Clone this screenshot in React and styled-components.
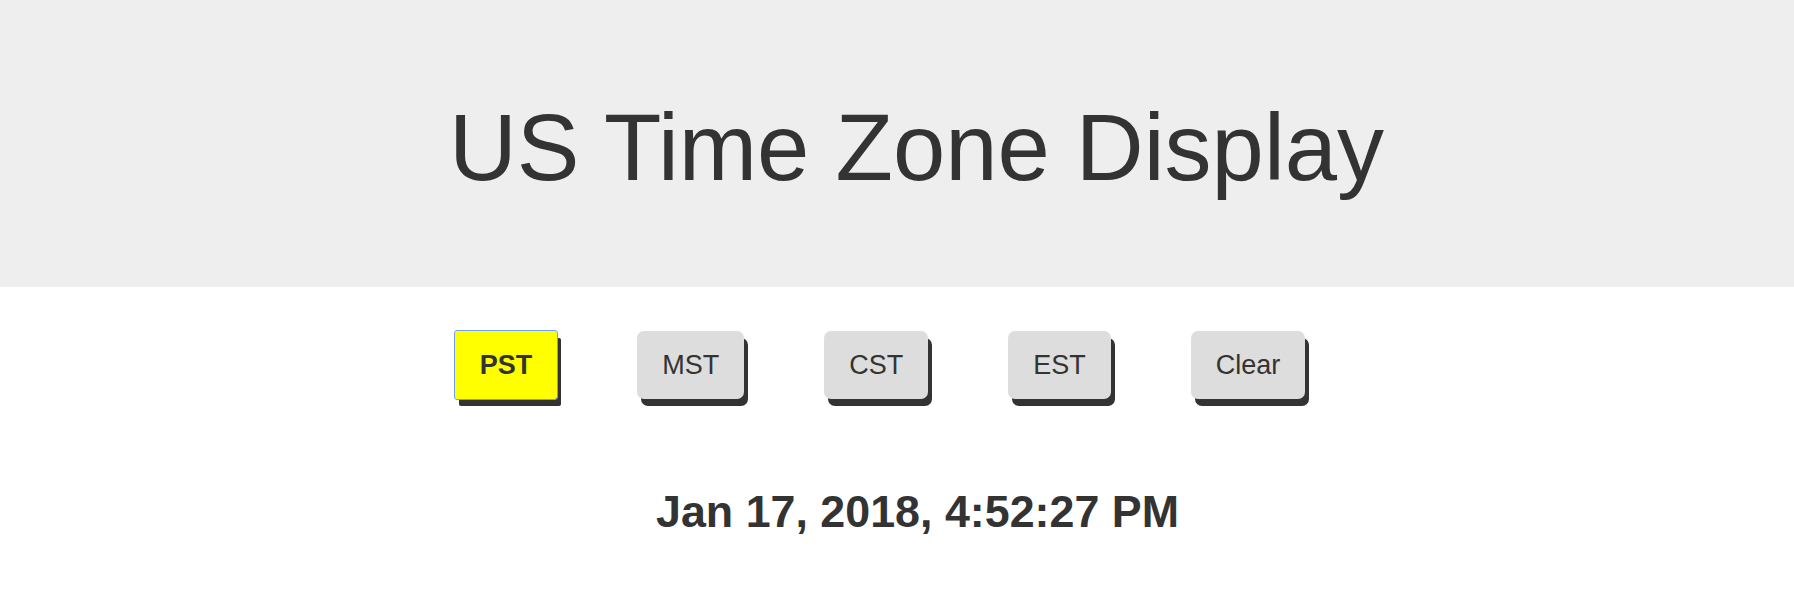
import React, { useState } from "react";
import styled, { createGlobalStyle, css } from "styled-components";

const GlobalStyle = createGlobalStyle`
  html, body {
    margin: 0;
    padding: 0;
    background: #ffffff;
  }
  body {
    font-family: "Liberation Sans", Arial, Helvetica, sans-serif;
    color: #333333;
  }
`;

const Header = styled.header`
  background: #eeeeee;
  height: 287px;
  box-sizing: border-box;
  padding: 101px 0 0 39px;
`;

const Title = styled.h1`
  margin: 0;
  font-size: 94px;
  line-height: 1;
  font-weight: 400;
  text-align: center;
  color: #333333;
`;

const Main = styled.main`
  padding: 44px 0 0 46px;
  display: flex;
  flex-direction: column;
  align-items: center;
`;

const ButtonRow = styled.div`
  display: flex;
  justify-content: center;
  gap: 80px;
  padding-right: 80px;
`;

const ZoneButton = styled.button`
  height: 68px;
  padding: 0 25px;
  border: none;
  border-radius: 7px;
  background: #dddddd;
  color: #333333;
  font-family: "Liberation Sans", Arial, Helvetica, sans-serif;
  font-size: 27px;
  font-weight: 400;
  box-shadow: 4px 7px 0 #333333;
  cursor: pointer;
  outline: none;

  ${(p) =>
    p.$active &&
    css`
      background: #ffff00;
      font-weight: 700;
      border-radius: 2px;
      outline: 1.5px solid #6f9ff2;
      outline-offset: 0;
    `}
`;

const DateLine = styled.div`
  margin: 90px 5px 0 0;
  font-size: 44.8px;
  line-height: 1;
  font-weight: 700;
  color: #333333;
  text-align: center;
`;

const zones = ["PST", "MST", "CST", "EST", "Clear"];

export default function App() {
  const [active, setActive] = useState("PST");
  return (
    <>
      <GlobalStyle />
      <Header>
        <Title>US Time Zone Display</Title>
      </Header>
      <Main>
        <ButtonRow>
          {zones.map((z) => (
            <ZoneButton key={z} $active={active === z} onClick={() => setActive(z)}>
              {z}
            </ZoneButton>
          ))}
        </ButtonRow>
        <DateLine>Jan 17, 2018, 4:52:27 PM</DateLine>
      </Main>
    </>
  );
}
